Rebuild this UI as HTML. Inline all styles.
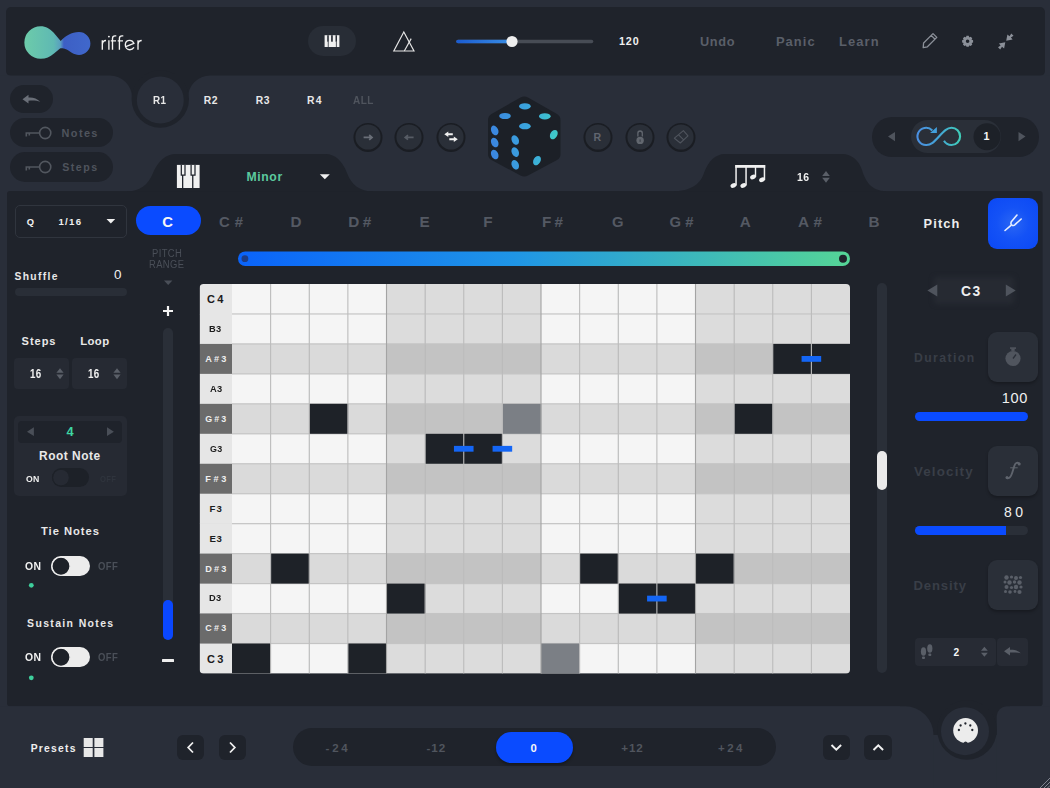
<!DOCTYPE html>
<html><head><meta charset="utf-8"><style>
html,body{margin:0;padding:0}
body{width:1050px;height:788px;position:relative;overflow:hidden;background:#292e39;font-family:"Liberation Sans",sans-serif}
.b{position:absolute;display:block}
.t{position:absolute;white-space:nowrap}
</style></head><body>
<svg class="b" style="left:0;top:0" width="1050" height="788" viewBox="0 0 1050 788"><rect x="0" y="0" width="1050" height="788" fill="#292e39"/><rect x="6" y="7" width="1039" height="69" rx="5" fill="#1f232b"/><rect x="105" y="74" width="110" height="27" fill="#1f232b"/><path d="M0,75.5 H110 A22,22 0 0 1 132,97.5 V150 H0 Z" fill="#292e39"/><path d="M188,150 V97.5 A22,22 0 0 1 210,75.5 H1050 V150 Z" fill="#292e39"/><circle cx="160.3" cy="99" r="28.7" fill="#1f232b"/><circle cx="160.3" cy="100" r="23.5" fill="#292e39"/><rect x="7" y="191" width="1035.6" height="515.3" rx="3" fill="#1f232b"/><path d="M126,191.5 C140,191.5 148,185 153,173 C158,161 166,154.1 176,154.1 H326 C334,154.1 342,160 347,173 C351,184 359,191.5 374,191.5 Z" fill="#1f232b"/><path d="M670,191.5 C690,191.5 700,185 704,173 C708,162 715,154.1 725,154.1 H842 C852,154.1 859,161 862,170 C866,183 872,191.5 890,191.5 Z" fill="#1f232b"/><rect x="900" y="704" width="110" height="31" fill="#1f232b"/><path d="M0,706.3 H905 A28.5,28.5 0 0 1 933.5,734.8 V788 H0 Z" fill="#292e39"/><path d="M996.7,788 V716 A10.3,10.3 0 0 1 1007,706.3 H1050 V788 Z" fill="#292e39"/><circle cx="967" cy="730" r="29.75" fill="#1f232b"/><circle cx="965" cy="731.2" r="24" fill="#292e39"/></svg>
<svg class="b" style="left:0px;top:0px;" width="160" height="80" viewBox="0 0 160 80"><defs><linearGradient id="lg" x1="23" y1="0" x2="91" y2="0" gradientUnits="userSpaceOnUse">
<stop offset="0" stop-color="#6dcca9"/><stop offset="0.45" stop-color="#5fb9b3"/><stop offset="0.55" stop-color="#5a9fc0"/><stop offset="0.6" stop-color="#3d5fc4"/><stop offset="1" stop-color="#4068cc"/></linearGradient></defs>
<path d="M40.6,26.3 C46,26.3 50,29 53.5,32.5 L60.7,40.9 C65,36.5 71.5,32.1 79,32.1 A11.4,11.4 0 0 1 79,54.9 C73.5,54.9 70.5,51.5 66,49.3 C63.5,48.2 61.5,48.2 60,48.4 L54,53.5 C50,57 46,58.8 40.6,58.8 A16.25,16.25 0 0 1 40.6,26.3 Z" fill="url(#lg)"/>
<g fill="none" stroke="#f2f2f2" stroke-width="1.35" stroke-linecap="butt">
<path d="M102.3,40.3 V49.7 M102.3,44.5 C102.5,41.5 104,40.5 106,40.5"/>
<path d="M108.9,40.3 V49.7"/>
<path d="M112.5,49.7 V38.5 C112.5,36.6 113.5,35.9 115,35.9 H116.3 M110.8,40.9 H116"/>
<path d="M119.4,49.7 V38.5 C119.4,36.6 120.4,35.9 122,35.9 H123.3 M117.7,40.9 H123"/>
<path d="M125.8,46.6 L133.9,43.3 C133,41.3 131.5,40.3 129.8,40.3 C127,40.3 125.3,42.4 125.3,45 C125.3,47.7 127.3,49.7 129.8,49.7 C131.6,49.7 133,48.8 134,47.4"/>
<path d="M138,40.3 V49.7 M138,44.5 C138.2,41.5 139.7,40.5 141.7,40.5"/>
</g>
<circle cx="108.9" cy="36.6" r="0.95" fill="#f2f2f2"/></svg>
<div class="b" style="left:308px;top:26px;width:48px;height:30px;background:#282d36;border-radius:15px;"></div>
<svg class="b" style="left:322px;top:33px;" width="20" height="17" viewBox="322 33 20 17"><rect x="324.6" y="35.2" width="14.8" height="11.8" fill="#f0f0f0"/>
<g fill="#282d36"><rect x="327.2" y="35.2" width="1.6" height="6.5"/><rect x="331.1" y="35.2" width="1.7" height="6.5"/><rect x="335.5" y="35.2" width="1.5" height="6.5"/><rect x="327.8" y="41.5" width="0.8" height="5.5"/><rect x="335.9" y="41.5" width="0.8" height="5.5"/></g></svg>
<svg class="b" style="left:390px;top:28px;" width="28" height="26" viewBox="390 28 28 26"><g fill="none" stroke="#e6e6e6" stroke-width="1.15" stroke-linejoin="miter"><path d="M403.8,32 L393.8,51 H414 Z"/><path d="M404.3,51 L411.2,38.6"/></g></svg>
<svg class="b" style="left:450px;top:32px;" width="150" height="20" viewBox="450 32 150 20"><defs><linearGradient id="tg" x1="456" y1="0" x2="512" y2="0" gradientUnits="userSpaceOnUse"><stop offset="0" stop-color="#1a5bd0"/><stop offset="1" stop-color="#3a8fe6"/></linearGradient></defs>
<line x1="458" y1="41.5" x2="591.5" y2="41.5" stroke="#474c55" stroke-width="3.6" stroke-linecap="round"/>
<line x1="458" y1="41.5" x2="512" y2="41.5" stroke="url(#tg)" stroke-width="3.6" stroke-linecap="round"/>
<circle cx="512" cy="41.5" r="5.6" fill="#eeeeee"/></svg>
<div class="t" style="left:618.90px;top:36.06px;font-size:10.76px;line-height:10.76px;letter-spacing:0.93px;font-weight:700;color:#f0f0f0;">120</div>
<div class="t" style="left:699.90px;top:36.24px;font-size:12.76px;line-height:12.76px;letter-spacing:0.73px;font-weight:700;color:#5a5f69;">Undo</div>
<div class="t" style="left:775.90px;top:36.21px;font-size:12.95px;line-height:12.95px;letter-spacing:1.07px;font-weight:700;color:#5a5f69;">Panic</div>
<div class="t" style="left:839.00px;top:36.21px;font-size:12.95px;line-height:12.95px;letter-spacing:1.09px;font-weight:700;color:#5a5f69;">Learn</div>
<svg class="b" style="left:915px;top:28px;" width="30" height="26" viewBox="915 28 30 26"><g fill="none" stroke="#8b9099" stroke-width="1.3" stroke-linejoin="round"><path d="M923.2,47.6 L923.6,43 L933,33.6 L936.8,37.4 L927.4,46.8 Z M931.2,35.4 L935,39.2"/></g></svg>
<svg class="b" style="left:955px;top:29px;" width="25" height="25" viewBox="955 29 25 25"><path d="M973.09,40.19 L973.09,42.41 L971.43,43.01 L971.52,42.80 L972.27,44.39 L970.69,45.97 L969.10,45.22 L969.31,45.13 L968.71,46.79 L966.49,46.79 L965.89,45.13 L966.10,45.22 L964.51,45.97 L962.93,44.39 L963.68,42.80 L963.77,43.01 L962.11,42.41 L962.11,40.19 L963.77,39.59 L963.68,39.80 L962.93,38.21 L964.51,36.63 L966.10,37.38 L965.89,37.47 L966.49,35.81 L968.71,35.81 L969.31,37.47 L969.10,37.38 L970.69,36.63 L972.27,38.21 L971.52,39.80 L971.43,39.59 Z M969.4,41.3 A1.8,1.8 0 1 0 965.8000000000001,41.3 A1.8,1.8 0 1 0 969.4,41.3 Z" fill="#8b9099" fill-rule="evenodd"/></svg>
<svg class="b" style="left:994px;top:30px;" width="24" height="22" viewBox="994 30 24 22"><g fill="#8b9099"><path d="M1006.2,40.8 L1007.4,34.4 L1009.5,36.3 L1011.3,33.6 L1013.5,35.8 L1010.9,37.6 L1012.6,39.6 Z"/><path d="M1005.3,42.2 L1004.1,48.6 L1002,46.7 L1000.2,49.4 L998,47.2 L1000.6,45.4 L998.9,43.4 Z"/></g></svg>
<div class="b" style="left:10px;top:85px;width:43px;height:28px;background:#1f232b;border-radius:14px;"></div>
<svg class="b" style="left:18px;top:90px;" width="28" height="20" viewBox="18 90 28 20"><path d="M22.5,99.2 L28.5,94.8 L28.5,97.6 C33,97.2 37,98.6 40.3,101.8 C36.8,100.6 33,100.4 28.5,100.8 L28.5,103.6 Z" fill="#6a6f78"/></svg>
<div class="b" style="left:10px;top:118px;width:103px;height:29px;background:#1f232b;border-radius:15px;"></div>
<div class="b" style="left:10px;top:152px;width:103px;height:30px;background:#1f232b;border-radius:15px;"></div>
<svg class="b" style="left:20px;top:122.80000000000001px;" width="36" height="20" viewBox="20 122.80000000000001 36 20"><g fill="none" stroke="#52575f" stroke-width="1.6"><circle cx="45.2" cy="132.8" r="5.6"/><path d="M25.5,132.8 H39.5 M26.3,132.8 V136.3 M29.3,132.8 V135.3"/></g></svg>
<svg class="b" style="left:20px;top:157px;" width="36" height="20" viewBox="20 157 36 20"><g fill="none" stroke="#52575f" stroke-width="1.6"><circle cx="45.2" cy="167" r="5.6"/><path d="M25.5,167 H39.5 M26.3,167 V170.5 M29.3,167 V169.5"/></g></svg>
<div class="t" style="left:61.60px;top:128.14px;font-size:10.91px;line-height:10.91px;letter-spacing:1.38px;font-weight:700;color:#4f545d;">Notes</div>
<div class="t" style="left:62.20px;top:161.99px;font-size:10.60px;line-height:10.60px;letter-spacing:1.51px;font-weight:700;color:#4f545d;">Steps</div>
<div class="t" style="left:153.00px;top:96.33px;font-size:10.33px;line-height:10.33px;letter-spacing:0.40px;font-weight:700;transform:scaleX(0.956);transform-origin:0 0;color:#e8e8e8;">R1</div>
<div class="t" style="left:203.70px;top:96.33px;font-size:10.33px;line-height:10.33px;letter-spacing:0.51px;font-weight:700;color:#e8e8e8;">R2</div>
<div class="t" style="left:255.70px;top:96.33px;font-size:10.33px;line-height:10.33px;letter-spacing:0.51px;font-weight:700;color:#e8e8e8;">R3</div>
<div class="t" style="left:307.10px;top:96.33px;font-size:10.33px;line-height:10.33px;letter-spacing:1.11px;font-weight:700;color:#e8e8e8;">R4</div>
<div class="t" style="left:352.90px;top:96.33px;font-size:10.33px;line-height:10.33px;letter-spacing:0.40px;font-weight:700;transform:scaleX(0.972);transform-origin:0 0;color:#4f545d;">ALL</div>
<svg class="b" style="left:350.6px;top:119.6px;" width="34" height="34" viewBox="350.6 119.6 34 34"><circle cx="367.6" cy="137.2" r="14.5" fill="#1a1d23"/><circle cx="367.6" cy="136.6" r="12.6" fill="#2a2f38"/><path d="M363.2,137 H371.5 M368.8,134.6 L371.6,137 L368.8,139.4" fill="none" stroke="#6a6f78" stroke-width="1.7"/></svg>
<svg class="b" style="left:392.4px;top:119.6px;" width="34" height="34" viewBox="392.4 119.6 34 34"><circle cx="409.4" cy="137.2" r="14.5" fill="#1a1d23"/><circle cx="409.4" cy="136.6" r="12.6" fill="#2a2f38"/><path d="M414,137 H405.8 M408.4,134.7 L405.6,137 L408.4,139.3" fill="none" stroke="#575c65" stroke-width="1.7"/></svg>
<svg class="b" style="left:434.2px;top:119.6px;" width="34" height="34" viewBox="434.2 119.6 34 34"><circle cx="451.2" cy="137.2" r="14.5" fill="#1a1d23"/><circle cx="451.2" cy="136.6" r="12.6" fill="#2a2f38"/><g fill="#f0f0f0"><path d="M444.5,133.8 L448.5,131 V132.8 H453 V134.8 H448.5 V136.6 Z"/><path d="M458,138.8 L454,136 V137.8 H449.5 V139.8 H454 V141.6 Z"/></g></svg>
<svg class="b" style="left:580.9px;top:119.6px;" width="34" height="34" viewBox="580.9 119.6 34 34"><circle cx="597.9" cy="137.2" r="14.5" fill="#1a1d23"/><circle cx="597.9" cy="136.6" r="12.6" fill="#2a2f38"/></svg>
<div class="t" style="left:593.50px;top:132.19px;font-size:10.62px;line-height:10.62px;letter-spacing:0.00px;font-weight:700;color:#61666f;">R</div>
<svg class="b" style="left:622.7px;top:119.6px;" width="34" height="34" viewBox="622.7 119.6 34 34"><circle cx="639.7" cy="137.2" r="14.5" fill="#1a1d23"/><circle cx="639.7" cy="136.6" r="12.6" fill="#2a2f38"/><g fill="#62676f"><path d="M637.6,136 V132.8 A2.2,2.2 0 0 1 642,132.8 V136" fill="none" stroke="#62676f" stroke-width="1.3"/><circle cx="639.8" cy="140" r="3.7"/></g><path d="M639.8,139 V141.5" stroke="#2a2f38" stroke-width="0.8"/></svg>
<svg class="b" style="left:664.2px;top:119.6px;" width="34" height="34" viewBox="664.2 119.6 34 34"><circle cx="681.2" cy="137.2" r="14.5" fill="#1a1d23"/><circle cx="681.2" cy="136.6" r="12.6" fill="#2a2f38"/><g fill="none" stroke="#4f545d" stroke-width="1.1" stroke-linejoin="round"><path d="M683.6,130.3 L688.2,135.4 L680.5,142.6 L674.6,137.8 Z M678.8,134.4 L683.6,139.2"/></g></svg>
<svg class="b" style="left:480px;top:90px;" width="90" height="95" viewBox="480 90 90 95"><defs><linearGradient id="dg" x1="488" y1="0" x2="562" y2="0" gradientUnits="userSpaceOnUse"><stop offset="0" stop-color="#3b82e0"/><stop offset="0.55" stop-color="#3aa6dd"/><stop offset="1" stop-color="#40d0c4"/></linearGradient></defs>
<path d="M520.5,97.5 Q524.3,95.5 528,97.5 L557,114 Q560.5,116 560.5,120 V154 Q560.5,158 557,160 L528,175.5 Q524.3,177.5 520.5,175.5 L491.5,160 Q488,158 488,154 V120 Q488,116 491.5,114 Z" fill="#1c2027"/>
<g fill="url(#dg)">
<ellipse cx="524.9" cy="106.3" rx="5.8" ry="3.1"/>
<ellipse cx="505" cy="116" rx="5.8" ry="3.1"/>
<ellipse cx="544.8" cy="116.3" rx="5.8" ry="3.1"/>
<ellipse cx="524.9" cy="126.2" rx="5.8" ry="3.1"/>
<ellipse cx="494.7" cy="130.4" rx="3.5" ry="5" transform="rotate(-25 494.7 130.4)"/>
<ellipse cx="494.7" cy="142.5" rx="3.5" ry="5" transform="rotate(-25 494.7 142.5)"/>
<ellipse cx="494.7" cy="154.5" rx="3.5" ry="5" transform="rotate(-25 494.7 154.5)"/>
<ellipse cx="515.2" cy="140" rx="3.5" ry="5" transform="rotate(-25 515.2 140)"/>
<ellipse cx="515.2" cy="152.1" rx="3.5" ry="5" transform="rotate(-25 515.2 152.1)"/>
<ellipse cx="515.2" cy="164.8" rx="3.5" ry="5" transform="rotate(-25 515.2 164.8)"/>
<ellipse cx="553.8" cy="134.6" rx="3.5" ry="5" transform="rotate(30 553.8 134.6)"/>
<ellipse cx="537" cy="160.6" rx="3.5" ry="5" transform="rotate(30 537 160.6)"/>
</g></svg>
<div class="b" style="left:872px;top:117px;width:167px;height:40px;background:#1f232b;border-radius:20px;"></div>
<div class="b" style="left:911px;top:120px;width:90px;height:33px;background:#2a2f38;border-radius:16.5px;"></div>
<svg class="b" style="left:880px;top:125px;" width="20" height="20" viewBox="880 125 20 20"><path d="M895,132 L888,136.6 L895,141.2 Z" fill="#4f545d"/></svg>
<svg class="b" style="left:1010px;top:125px;" width="20" height="20" viewBox="1010 125 20 20"><path d="M1018.5,132 L1025.5,136.6 L1018.5,141.2 Z" fill="#4f545d"/></svg>
<svg class="b" style="left:972px;top:122px;" width="30" height="30" viewBox="972 122 30 30"><circle cx="987" cy="136.7" r="13.5" fill="#1d2128"/></svg>
<div class="t" style="left:983.50px;top:131.46px;font-size:10.76px;line-height:10.76px;letter-spacing:0.00px;font-weight:700;color:#f4f4f4;">1</div>
<svg class="b" style="left:912px;top:120px;" width="55" height="32" viewBox="912 120 55 32"><defs><linearGradient id="ig" x1="917" y1="0" x2="962" y2="0" gradientUnits="userSpaceOnUse"><stop offset="0" stop-color="#4a8ee0"/><stop offset="0.5" stop-color="#44a6d6"/><stop offset="1" stop-color="#3fd0b6"/></linearGradient></defs>
<path d="M932.3,130.5 A8.6,8.6 0 1 0 926.4,145 C931,145 934,142 939,136.5 C944,131 947,127.8 951.5,127.8 A8.6,8.6 0 0 1 951.5,145 A8.6,8.6 0 0 1 944,140.7" fill="none" stroke="url(#ig)" stroke-width="2.1"/>
<path d="M930.1,132.9 L936.9,133.1 L936.9,126.9 Z" fill="#42a0dc"/></svg>
<svg class="b" style="left:175px;top:163px;" width="28" height="28" viewBox="175 163 28 28"><rect x="176.9" y="164.9" width="22.7" height="23.1" fill="#f0f0f0"/>
<g fill="none" stroke="#1f232b" stroke-width="1.25"><path d="M181.3,164.9 V175 H185 V164.9"/><path d="M191.1,164.9 V175 H195 V164.9"/></g>
<g fill="#1f232b"><rect x="182" y="175" width="1.3" height="13"/><rect x="192.1" y="175" width="1.3" height="13"/></g></svg>
<div class="t" style="left:246.60px;top:170.63px;font-size:12.22px;line-height:12.22px;letter-spacing:0.58px;font-weight:700;color:#5cc99e;">Minor</div>
<svg class="b" style="left:316px;top:170px;" width="18" height="12" viewBox="316 170 18 12"><path d="M319.8,174.3 H329.8 L324.8,179.2 Z" fill="#f0f0f0"/></svg>
<svg class="b" style="left:725px;top:160px;" width="45" height="32" viewBox="725 160 45 32"><g fill="#f0f0f0"><ellipse cx="733.4" cy="185.6" rx="3" ry="2.2" transform="rotate(-25 733.4 185.6)"/><ellipse cx="743.3" cy="185.6" rx="3" ry="2.2" transform="rotate(-25 743.3 185.6)"/><ellipse cx="753" cy="177" rx="3" ry="2.2" transform="rotate(-25 753 177)"/><ellipse cx="762" cy="179.8" rx="3" ry="2.2" transform="rotate(-25 762 179.8)"/>
<rect x="735.3" y="165" width="1.5" height="20.5"/><rect x="745.3" y="165" width="1.5" height="20.5"/><rect x="754.8" y="165" width="1.4" height="12"/><rect x="763.7" y="165" width="1.5" height="15"/>
<rect x="735.3" y="165" width="29.9" height="2.8"/></g></svg>
<div class="t" style="left:797.00px;top:171.57px;font-size:11.35px;line-height:11.35px;letter-spacing:0.40px;font-weight:700;transform:scaleX(0.922);transform-origin:0 0;color:#f0f0f0;">16</div>
<svg class="b" style="left:818px;top:168px;" width="16" height="18" viewBox="818 168 16 18"><g fill="#5a5f68"><path d="M822.2,176 L826,171 L829.8,176 Z"/><path d="M822.2,177.8 L826,182.8 L829.8,177.8 Z"/></g></svg>
<div class="b" style="left:14.5px;top:205.2px;width:112.5px;height:32.80000000000001px;background:#1f232b;border-radius:5px;border:1px solid #30353e;box-sizing:border-box"></div>
<div class="t" style="left:26.70px;top:218.19px;font-size:9.33px;line-height:9.33px;letter-spacing:0.00px;font-weight:700;color:#f0f0f0;">Q</div>
<div class="t" style="left:58.40px;top:217.05px;font-size:9.60px;line-height:9.60px;letter-spacing:1.30px;font-weight:700;color:#f0f0f0;">1/16</div>
<svg class="b" style="left:103px;top:215px;" width="16" height="12" viewBox="103 215 16 12"><path d="M106.5,219 H115.2 L110.85,223.5 Z" fill="#f0f0f0"/></svg>
<div class="t" style="left:14.50px;top:272.14px;font-size:10.32px;line-height:10.32px;letter-spacing:1.34px;font-weight:700;color:#e8e8e8;">Shuffle</div>
<div class="t" style="left:114.10px;top:267.97px;font-size:13.43px;line-height:13.43px;letter-spacing:0.00px;font-weight:400;color:#f0f0f0;">0</div>
<div class="b" style="left:14.5px;top:288.4px;width:112.5px;height:8.100000000000023px;background:#292e37;border-radius:4px;"></div>
<div class="t" style="left:21.60px;top:336.13px;font-size:11.02px;line-height:11.02px;letter-spacing:0.97px;font-weight:700;color:#e8e8e8;">Steps</div>
<div class="t" style="left:80.20px;top:335.97px;font-size:11.35px;line-height:11.35px;letter-spacing:0.40px;font-weight:700;transform:scaleX(1.000);transform-origin:0 0;color:#e8e8e8;">Loop</div>
<div class="b" style="left:14.3px;top:358.3px;width:54.7px;height:31.099999999999966px;background:#262a33;border-radius:4px;"></div>
<div class="b" style="left:72px;top:358.3px;width:54.7px;height:31.099999999999966px;background:#262a33;border-radius:4px;"></div>
<div class="t" style="left:30.10px;top:368.41px;font-size:12.95px;line-height:12.95px;letter-spacing:0.40px;font-weight:700;transform:scaleX(0.757);transform-origin:0 0;color:#f0f0f0;">16</div>
<div class="t" style="left:88.10px;top:368.41px;font-size:12.95px;line-height:12.95px;letter-spacing:0.40px;font-weight:700;transform:scaleX(0.757);transform-origin:0 0;color:#f0f0f0;">16</div>
<svg class="b" style="left:53.5px;top:366px;" width="12" height="16" viewBox="53.5 366 12 16"><g fill="#5a5f68"><path d="M55.9,372.8 L59.5,368.2 L63.1,372.8 Z"/><path d="M55.9,374.6 L59.5,379.2 L63.1,374.6 Z"/></g></svg>
<svg class="b" style="left:111.2px;top:366px;" width="12" height="16" viewBox="111.2 366 12 16"><g fill="#5a5f68"><path d="M113.60000000000001,372.8 L117.2,368.2 L120.8,372.8 Z"/><path d="M113.60000000000001,374.6 L117.2,379.2 L120.8,374.6 Z"/></g></svg>
<div class="b" style="left:14.3px;top:416px;width:112.4px;height:80px;background:#262a33;border-radius:5px;"></div>
<div class="b" style="left:18.3px;top:420.5px;width:104.0px;height:22.30000000000001px;background:#1f232b;border-radius:4px;"></div>
<svg class="b" style="left:24px;top:424px;" width="14" height="16" viewBox="24 424 14 16"><path d="M33.9,427.3 L27,431.7 L33.9,436.1 Z" fill="#4a4f58"/></svg>
<svg class="b" style="left:104px;top:424px;" width="14" height="16" viewBox="104 424 14 16"><path d="M107,427.3 L113.9,431.7 L107,436.1 Z" fill="#4a4f58"/></svg>
<div class="t" style="left:66.40px;top:425.73px;font-size:12.80px;line-height:12.80px;letter-spacing:0.00px;font-weight:700;color:#3ed6a2;">4</div>
<div class="t" style="left:39.10px;top:451.07px;font-size:11.93px;line-height:11.93px;letter-spacing:0.51px;font-weight:700;color:#e8e8e8;">Root Note</div>
<div class="t" style="left:26.20px;top:473.67px;font-size:9.47px;line-height:9.47px;letter-spacing:0.40px;font-weight:700;transform:scaleX(0.917);transform-origin:0 0;color:#f0f0f0;">ON</div>
<div class="b" style="left:51.7px;top:468.3px;width:37.7px;height:18.69999999999999px;background:#1d2128;border-radius:9.4px;"></div>
<svg class="b" style="left:50px;top:466px;" width="24" height="24" viewBox="50 466 24 24"><circle cx="61" cy="477.6" r="8.3" fill="#262a33" stroke="#1d2128" stroke-width="1"/></svg>
<div class="t" style="left:100.00px;top:473.67px;font-size:9.47px;line-height:9.47px;letter-spacing:0.40px;font-weight:700;transform:scaleX(0.811);transform-origin:0 0;color:#2f343d;">OFF</div>
<div class="t" style="left:41.00px;top:526.29px;font-size:11.20px;line-height:11.20px;letter-spacing:0.97px;font-weight:700;color:#e8e8e8;">Tie Notes</div>
<div class="t" style="left:27.10px;top:618.62px;font-size:10.46px;line-height:10.46px;letter-spacing:1.36px;font-weight:700;color:#e8e8e8;">Sustain Notes</div>
<div class="b" style="left:50.7px;top:555.5px;width:39.3px;height:20.5px;background:#ececec;border-radius:10.25px;"></div>
<svg class="b" style="left:48px;top:553.5px;" width="26" height="25" viewBox="48 553.5 26 25"><circle cx="61" cy="565.75" r="9.1" fill="#1d2128" stroke="#ececec" stroke-width="1.4"/></svg>
<div class="b" style="left:50.7px;top:646.7px;width:39.3px;height:20.5px;background:#ececec;border-radius:10.25px;"></div>
<svg class="b" style="left:48px;top:644.7px;" width="26" height="25" viewBox="48 644.7 26 25"><circle cx="61" cy="656.95" r="9.1" fill="#1d2128" stroke="#ececec" stroke-width="1.4"/></svg>
<div class="t" style="left:24.80px;top:561.62px;font-size:10.46px;line-height:10.46px;letter-spacing:0.40px;font-weight:700;transform:scaleX(0.994);transform-origin:0 0;color:#f0f0f0;">ON</div>
<div class="t" style="left:97.80px;top:561.62px;font-size:10.46px;line-height:10.46px;letter-spacing:0.40px;font-weight:700;transform:scaleX(0.912);transform-origin:0 0;color:#4a4f58;">OFF</div>
<div class="t" style="left:24.80px;top:653.42px;font-size:10.46px;line-height:10.46px;letter-spacing:0.40px;font-weight:700;transform:scaleX(0.994);transform-origin:0 0;color:#f0f0f0;">ON</div>
<div class="t" style="left:97.80px;top:653.42px;font-size:10.46px;line-height:10.46px;letter-spacing:0.40px;font-weight:700;transform:scaleX(0.912);transform-origin:0 0;color:#4a4f58;">OFF</div>
<svg class="b" style="left:26px;top:580px;" width="12" height="12" viewBox="26 580 12 12"><circle cx="31.3" cy="585.3" r="2.4" fill="#3ecf9c"/></svg>
<svg class="b" style="left:26px;top:672px;" width="12" height="12" viewBox="26 672 12 12"><circle cx="31.3" cy="677.8" r="2.4" fill="#3ecf9c"/></svg>
<div class="t" style="left:152.30px;top:249.48px;font-size:10.04px;line-height:10.04px;letter-spacing:0.40px;font-weight:400;transform:scaleX(0.940);transform-origin:0 0;color:#4a4f58;">PITCH</div>
<div class="t" style="left:149.00px;top:260.36px;font-size:10.18px;line-height:10.18px;letter-spacing:0.40px;font-weight:400;transform:scaleX(0.926);transform-origin:0 0;color:#4a4f58;">RANGE</div>
<svg class="b" style="left:160px;top:277px;" width="16" height="12" viewBox="160 277 16 12"><path d="M164,280.6 H172.4 L168.2,285 Z" fill="#4a4f58"/></svg>
<svg class="b" style="left:158px;top:302px;" width="20" height="20" viewBox="158 302 20 20"><path d="M163,311 H173 M168,306 V316" stroke="#f4f4f4" stroke-width="2.2"/></svg>
<div class="b" style="left:163px;top:327.5px;width:10px;height:312.79999999999995px;background:#2a2f38;border-radius:5px;"></div>
<div class="b" style="left:163px;top:600.3px;width:10px;height:40.0px;background:#0a47ff;border-radius:5px;"></div>
<div class="b" style="left:162px;top:659.3px;width:12px;height:2.5px;background:#eeeeee;border-radius:0.5px;"></div>
<div class="b" style="left:136px;top:205.7px;width:65px;height:29.5px;background:#0a4bff;border-radius:15px;"></div>
<div class="t" style="left:162.30px;top:214.65px;font-size:14.84px;line-height:14.84px;letter-spacing:0.00px;font-weight:700;color:#f6f6f6;">C</div>
<div class="t" style="left:219.10px;top:214.75px;font-size:14.84px;line-height:14.84px;letter-spacing:4.84px;font-weight:700;color:#545963;">C#</div>
<div class="t" style="left:290.50px;top:213.53px;font-size:15.27px;line-height:15.27px;letter-spacing:0.00px;font-weight:700;color:#545963;">D</div>
<div class="t" style="left:348.30px;top:213.53px;font-size:15.27px;line-height:15.27px;letter-spacing:3.39px;font-weight:700;color:#545963;">D#</div>
<div class="t" style="left:419.50px;top:213.53px;font-size:15.27px;line-height:15.27px;letter-spacing:0.00px;font-weight:700;color:#545963;">E</div>
<div class="t" style="left:483.30px;top:213.53px;font-size:15.27px;line-height:15.27px;letter-spacing:0.00px;font-weight:700;color:#545963;">F</div>
<div class="t" style="left:541.90px;top:213.53px;font-size:15.27px;line-height:15.27px;letter-spacing:3.37px;font-weight:700;color:#545963;">F#</div>
<div class="t" style="left:611.90px;top:214.75px;font-size:14.84px;line-height:14.84px;letter-spacing:0.00px;font-weight:700;color:#545963;">G</div>
<div class="t" style="left:669.50px;top:214.75px;font-size:14.84px;line-height:14.84px;letter-spacing:4.19px;font-weight:700;color:#545963;">G#</div>
<div class="t" style="left:739.80px;top:213.53px;font-size:15.27px;line-height:15.27px;letter-spacing:0.00px;font-weight:700;color:#545963;">A</div>
<div class="t" style="left:798.00px;top:213.53px;font-size:15.27px;line-height:15.27px;letter-spacing:4.49px;font-weight:700;color:#545963;">A#</div>
<div class="t" style="left:868.50px;top:213.53px;font-size:15.27px;line-height:15.27px;letter-spacing:0.00px;font-weight:700;color:#545963;">B</div>
<svg class="b" style="left:230px;top:245px;" width="630" height="28" viewBox="230 245 630 28"><defs><linearGradient id="gb" x1="238" y1="0" x2="850" y2="0" gradientUnits="userSpaceOnUse"><stop offset="0" stop-color="#0a63fa"/><stop offset="0.45" stop-color="#1f95e6"/><stop offset="1" stop-color="#55d596"/></linearGradient></defs>
<rect x="238" y="251.5" width="612" height="14.5" rx="7.25" fill="url(#gb)"/>
<circle cx="244.9" cy="258.7" r="3.4" fill="#1d3c85"/>
<circle cx="843" cy="258.7" r="4" fill="#1f232b"/></svg>
<svg class="b" style="left:195px;top:280px;" width="660" height="400" viewBox="195 280 660 400"><defs><clipPath id="gc"><rect x="199.6" y="284" width="650.4" height="389.5" rx="4"/></clipPath></defs><g clip-path="url(#gc)"><rect x="199.6" y="284.00" width="32.4" height="30.26" fill="#e6e6e6"/><rect x="232.00" y="284.00" width="38.92" height="30.26" fill="#f5f5f5"/><rect x="270.62" y="284.00" width="38.92" height="30.26" fill="#f5f5f5"/><rect x="309.25" y="284.00" width="38.92" height="30.26" fill="#f5f5f5"/><rect x="347.88" y="284.00" width="38.92" height="30.26" fill="#f5f5f5"/><rect x="386.50" y="284.00" width="38.92" height="30.26" fill="#dcdcdc"/><rect x="425.12" y="284.00" width="38.92" height="30.26" fill="#dcdcdc"/><rect x="463.75" y="284.00" width="38.92" height="30.26" fill="#dcdcdc"/><rect x="502.38" y="284.00" width="38.92" height="30.26" fill="#dcdcdc"/><rect x="541.00" y="284.00" width="38.92" height="30.26" fill="#f5f5f5"/><rect x="579.62" y="284.00" width="38.92" height="30.26" fill="#f5f5f5"/><rect x="618.25" y="284.00" width="38.92" height="30.26" fill="#f5f5f5"/><rect x="656.88" y="284.00" width="38.92" height="30.26" fill="#f5f5f5"/><rect x="695.50" y="284.00" width="38.92" height="30.26" fill="#dcdcdc"/><rect x="734.12" y="284.00" width="38.92" height="30.26" fill="#dcdcdc"/><rect x="772.75" y="284.00" width="38.92" height="30.26" fill="#dcdcdc"/><rect x="811.38" y="284.00" width="38.92" height="30.26" fill="#dcdcdc"/><rect x="199.6" y="313.96" width="32.4" height="30.26" fill="#e6e6e6"/><rect x="232.00" y="313.96" width="38.92" height="30.26" fill="#f5f5f5"/><rect x="270.62" y="313.96" width="38.92" height="30.26" fill="#f5f5f5"/><rect x="309.25" y="313.96" width="38.92" height="30.26" fill="#f5f5f5"/><rect x="347.88" y="313.96" width="38.92" height="30.26" fill="#f5f5f5"/><rect x="386.50" y="313.96" width="38.92" height="30.26" fill="#dcdcdc"/><rect x="425.12" y="313.96" width="38.92" height="30.26" fill="#dcdcdc"/><rect x="463.75" y="313.96" width="38.92" height="30.26" fill="#dcdcdc"/><rect x="502.38" y="313.96" width="38.92" height="30.26" fill="#dcdcdc"/><rect x="541.00" y="313.96" width="38.92" height="30.26" fill="#f5f5f5"/><rect x="579.62" y="313.96" width="38.92" height="30.26" fill="#f5f5f5"/><rect x="618.25" y="313.96" width="38.92" height="30.26" fill="#f5f5f5"/><rect x="656.88" y="313.96" width="38.92" height="30.26" fill="#f5f5f5"/><rect x="695.50" y="313.96" width="38.92" height="30.26" fill="#dcdcdc"/><rect x="734.12" y="313.96" width="38.92" height="30.26" fill="#dcdcdc"/><rect x="772.75" y="313.96" width="38.92" height="30.26" fill="#dcdcdc"/><rect x="811.38" y="313.96" width="38.92" height="30.26" fill="#dcdcdc"/><rect x="199.6" y="343.92" width="32.4" height="30.26" fill="#6b6b6b"/><rect x="232.00" y="343.92" width="38.92" height="30.26" fill="#dadada"/><rect x="270.62" y="343.92" width="38.92" height="30.26" fill="#dadada"/><rect x="309.25" y="343.92" width="38.92" height="30.26" fill="#dadada"/><rect x="347.88" y="343.92" width="38.92" height="30.26" fill="#dadada"/><rect x="386.50" y="343.92" width="38.92" height="30.26" fill="#c3c3c3"/><rect x="425.12" y="343.92" width="38.92" height="30.26" fill="#c3c3c3"/><rect x="463.75" y="343.92" width="38.92" height="30.26" fill="#c3c3c3"/><rect x="502.38" y="343.92" width="38.92" height="30.26" fill="#c3c3c3"/><rect x="541.00" y="343.92" width="38.92" height="30.26" fill="#dadada"/><rect x="579.62" y="343.92" width="38.92" height="30.26" fill="#dadada"/><rect x="618.25" y="343.92" width="38.92" height="30.26" fill="#dadada"/><rect x="656.88" y="343.92" width="38.92" height="30.26" fill="#dadada"/><rect x="695.50" y="343.92" width="38.92" height="30.26" fill="#c3c3c3"/><rect x="734.12" y="343.92" width="38.92" height="30.26" fill="#c3c3c3"/><rect x="772.75" y="343.92" width="38.92" height="30.26" fill="#c3c3c3"/><rect x="811.38" y="343.92" width="38.92" height="30.26" fill="#c3c3c3"/><rect x="199.6" y="373.88" width="32.4" height="30.26" fill="#e6e6e6"/><rect x="232.00" y="373.88" width="38.92" height="30.26" fill="#f5f5f5"/><rect x="270.62" y="373.88" width="38.92" height="30.26" fill="#f5f5f5"/><rect x="309.25" y="373.88" width="38.92" height="30.26" fill="#f5f5f5"/><rect x="347.88" y="373.88" width="38.92" height="30.26" fill="#f5f5f5"/><rect x="386.50" y="373.88" width="38.92" height="30.26" fill="#dcdcdc"/><rect x="425.12" y="373.88" width="38.92" height="30.26" fill="#dcdcdc"/><rect x="463.75" y="373.88" width="38.92" height="30.26" fill="#dcdcdc"/><rect x="502.38" y="373.88" width="38.92" height="30.26" fill="#dcdcdc"/><rect x="541.00" y="373.88" width="38.92" height="30.26" fill="#f5f5f5"/><rect x="579.62" y="373.88" width="38.92" height="30.26" fill="#f5f5f5"/><rect x="618.25" y="373.88" width="38.92" height="30.26" fill="#f5f5f5"/><rect x="656.88" y="373.88" width="38.92" height="30.26" fill="#f5f5f5"/><rect x="695.50" y="373.88" width="38.92" height="30.26" fill="#dcdcdc"/><rect x="734.12" y="373.88" width="38.92" height="30.26" fill="#dcdcdc"/><rect x="772.75" y="373.88" width="38.92" height="30.26" fill="#dcdcdc"/><rect x="811.38" y="373.88" width="38.92" height="30.26" fill="#dcdcdc"/><rect x="199.6" y="403.84" width="32.4" height="30.26" fill="#6b6b6b"/><rect x="232.00" y="403.84" width="38.92" height="30.26" fill="#dadada"/><rect x="270.62" y="403.84" width="38.92" height="30.26" fill="#dadada"/><rect x="309.25" y="403.84" width="38.92" height="30.26" fill="#dadada"/><rect x="347.88" y="403.84" width="38.92" height="30.26" fill="#dadada"/><rect x="386.50" y="403.84" width="38.92" height="30.26" fill="#c3c3c3"/><rect x="425.12" y="403.84" width="38.92" height="30.26" fill="#c3c3c3"/><rect x="463.75" y="403.84" width="38.92" height="30.26" fill="#c3c3c3"/><rect x="502.38" y="403.84" width="38.92" height="30.26" fill="#c3c3c3"/><rect x="541.00" y="403.84" width="38.92" height="30.26" fill="#dadada"/><rect x="579.62" y="403.84" width="38.92" height="30.26" fill="#dadada"/><rect x="618.25" y="403.84" width="38.92" height="30.26" fill="#dadada"/><rect x="656.88" y="403.84" width="38.92" height="30.26" fill="#dadada"/><rect x="695.50" y="403.84" width="38.92" height="30.26" fill="#c3c3c3"/><rect x="734.12" y="403.84" width="38.92" height="30.26" fill="#c3c3c3"/><rect x="772.75" y="403.84" width="38.92" height="30.26" fill="#c3c3c3"/><rect x="811.38" y="403.84" width="38.92" height="30.26" fill="#c3c3c3"/><rect x="199.6" y="433.80" width="32.4" height="30.26" fill="#e6e6e6"/><rect x="232.00" y="433.80" width="38.92" height="30.26" fill="#f5f5f5"/><rect x="270.62" y="433.80" width="38.92" height="30.26" fill="#f5f5f5"/><rect x="309.25" y="433.80" width="38.92" height="30.26" fill="#f5f5f5"/><rect x="347.88" y="433.80" width="38.92" height="30.26" fill="#f5f5f5"/><rect x="386.50" y="433.80" width="38.92" height="30.26" fill="#dcdcdc"/><rect x="425.12" y="433.80" width="38.92" height="30.26" fill="#dcdcdc"/><rect x="463.75" y="433.80" width="38.92" height="30.26" fill="#dcdcdc"/><rect x="502.38" y="433.80" width="38.92" height="30.26" fill="#dcdcdc"/><rect x="541.00" y="433.80" width="38.92" height="30.26" fill="#f5f5f5"/><rect x="579.62" y="433.80" width="38.92" height="30.26" fill="#f5f5f5"/><rect x="618.25" y="433.80" width="38.92" height="30.26" fill="#f5f5f5"/><rect x="656.88" y="433.80" width="38.92" height="30.26" fill="#f5f5f5"/><rect x="695.50" y="433.80" width="38.92" height="30.26" fill="#dcdcdc"/><rect x="734.12" y="433.80" width="38.92" height="30.26" fill="#dcdcdc"/><rect x="772.75" y="433.80" width="38.92" height="30.26" fill="#dcdcdc"/><rect x="811.38" y="433.80" width="38.92" height="30.26" fill="#dcdcdc"/><rect x="199.6" y="463.76" width="32.4" height="30.26" fill="#6b6b6b"/><rect x="232.00" y="463.76" width="38.92" height="30.26" fill="#dadada"/><rect x="270.62" y="463.76" width="38.92" height="30.26" fill="#dadada"/><rect x="309.25" y="463.76" width="38.92" height="30.26" fill="#dadada"/><rect x="347.88" y="463.76" width="38.92" height="30.26" fill="#dadada"/><rect x="386.50" y="463.76" width="38.92" height="30.26" fill="#c3c3c3"/><rect x="425.12" y="463.76" width="38.92" height="30.26" fill="#c3c3c3"/><rect x="463.75" y="463.76" width="38.92" height="30.26" fill="#c3c3c3"/><rect x="502.38" y="463.76" width="38.92" height="30.26" fill="#c3c3c3"/><rect x="541.00" y="463.76" width="38.92" height="30.26" fill="#dadada"/><rect x="579.62" y="463.76" width="38.92" height="30.26" fill="#dadada"/><rect x="618.25" y="463.76" width="38.92" height="30.26" fill="#dadada"/><rect x="656.88" y="463.76" width="38.92" height="30.26" fill="#dadada"/><rect x="695.50" y="463.76" width="38.92" height="30.26" fill="#c3c3c3"/><rect x="734.12" y="463.76" width="38.92" height="30.26" fill="#c3c3c3"/><rect x="772.75" y="463.76" width="38.92" height="30.26" fill="#c3c3c3"/><rect x="811.38" y="463.76" width="38.92" height="30.26" fill="#c3c3c3"/><rect x="199.6" y="493.72" width="32.4" height="30.26" fill="#e6e6e6"/><rect x="232.00" y="493.72" width="38.92" height="30.26" fill="#f5f5f5"/><rect x="270.62" y="493.72" width="38.92" height="30.26" fill="#f5f5f5"/><rect x="309.25" y="493.72" width="38.92" height="30.26" fill="#f5f5f5"/><rect x="347.88" y="493.72" width="38.92" height="30.26" fill="#f5f5f5"/><rect x="386.50" y="493.72" width="38.92" height="30.26" fill="#dcdcdc"/><rect x="425.12" y="493.72" width="38.92" height="30.26" fill="#dcdcdc"/><rect x="463.75" y="493.72" width="38.92" height="30.26" fill="#dcdcdc"/><rect x="502.38" y="493.72" width="38.92" height="30.26" fill="#dcdcdc"/><rect x="541.00" y="493.72" width="38.92" height="30.26" fill="#f5f5f5"/><rect x="579.62" y="493.72" width="38.92" height="30.26" fill="#f5f5f5"/><rect x="618.25" y="493.72" width="38.92" height="30.26" fill="#f5f5f5"/><rect x="656.88" y="493.72" width="38.92" height="30.26" fill="#f5f5f5"/><rect x="695.50" y="493.72" width="38.92" height="30.26" fill="#dcdcdc"/><rect x="734.12" y="493.72" width="38.92" height="30.26" fill="#dcdcdc"/><rect x="772.75" y="493.72" width="38.92" height="30.26" fill="#dcdcdc"/><rect x="811.38" y="493.72" width="38.92" height="30.26" fill="#dcdcdc"/><rect x="199.6" y="523.68" width="32.4" height="30.26" fill="#e6e6e6"/><rect x="232.00" y="523.68" width="38.92" height="30.26" fill="#f5f5f5"/><rect x="270.62" y="523.68" width="38.92" height="30.26" fill="#f5f5f5"/><rect x="309.25" y="523.68" width="38.92" height="30.26" fill="#f5f5f5"/><rect x="347.88" y="523.68" width="38.92" height="30.26" fill="#f5f5f5"/><rect x="386.50" y="523.68" width="38.92" height="30.26" fill="#dcdcdc"/><rect x="425.12" y="523.68" width="38.92" height="30.26" fill="#dcdcdc"/><rect x="463.75" y="523.68" width="38.92" height="30.26" fill="#dcdcdc"/><rect x="502.38" y="523.68" width="38.92" height="30.26" fill="#dcdcdc"/><rect x="541.00" y="523.68" width="38.92" height="30.26" fill="#f5f5f5"/><rect x="579.62" y="523.68" width="38.92" height="30.26" fill="#f5f5f5"/><rect x="618.25" y="523.68" width="38.92" height="30.26" fill="#f5f5f5"/><rect x="656.88" y="523.68" width="38.92" height="30.26" fill="#f5f5f5"/><rect x="695.50" y="523.68" width="38.92" height="30.26" fill="#dcdcdc"/><rect x="734.12" y="523.68" width="38.92" height="30.26" fill="#dcdcdc"/><rect x="772.75" y="523.68" width="38.92" height="30.26" fill="#dcdcdc"/><rect x="811.38" y="523.68" width="38.92" height="30.26" fill="#dcdcdc"/><rect x="199.6" y="553.64" width="32.4" height="30.26" fill="#6b6b6b"/><rect x="232.00" y="553.64" width="38.92" height="30.26" fill="#dadada"/><rect x="270.62" y="553.64" width="38.92" height="30.26" fill="#dadada"/><rect x="309.25" y="553.64" width="38.92" height="30.26" fill="#dadada"/><rect x="347.88" y="553.64" width="38.92" height="30.26" fill="#dadada"/><rect x="386.50" y="553.64" width="38.92" height="30.26" fill="#c3c3c3"/><rect x="425.12" y="553.64" width="38.92" height="30.26" fill="#c3c3c3"/><rect x="463.75" y="553.64" width="38.92" height="30.26" fill="#c3c3c3"/><rect x="502.38" y="553.64" width="38.92" height="30.26" fill="#c3c3c3"/><rect x="541.00" y="553.64" width="38.92" height="30.26" fill="#dadada"/><rect x="579.62" y="553.64" width="38.92" height="30.26" fill="#dadada"/><rect x="618.25" y="553.64" width="38.92" height="30.26" fill="#dadada"/><rect x="656.88" y="553.64" width="38.92" height="30.26" fill="#dadada"/><rect x="695.50" y="553.64" width="38.92" height="30.26" fill="#c3c3c3"/><rect x="734.12" y="553.64" width="38.92" height="30.26" fill="#c3c3c3"/><rect x="772.75" y="553.64" width="38.92" height="30.26" fill="#c3c3c3"/><rect x="811.38" y="553.64" width="38.92" height="30.26" fill="#c3c3c3"/><rect x="199.6" y="583.60" width="32.4" height="30.26" fill="#e6e6e6"/><rect x="232.00" y="583.60" width="38.92" height="30.26" fill="#f5f5f5"/><rect x="270.62" y="583.60" width="38.92" height="30.26" fill="#f5f5f5"/><rect x="309.25" y="583.60" width="38.92" height="30.26" fill="#f5f5f5"/><rect x="347.88" y="583.60" width="38.92" height="30.26" fill="#f5f5f5"/><rect x="386.50" y="583.60" width="38.92" height="30.26" fill="#dcdcdc"/><rect x="425.12" y="583.60" width="38.92" height="30.26" fill="#dcdcdc"/><rect x="463.75" y="583.60" width="38.92" height="30.26" fill="#dcdcdc"/><rect x="502.38" y="583.60" width="38.92" height="30.26" fill="#dcdcdc"/><rect x="541.00" y="583.60" width="38.92" height="30.26" fill="#f5f5f5"/><rect x="579.62" y="583.60" width="38.92" height="30.26" fill="#f5f5f5"/><rect x="618.25" y="583.60" width="38.92" height="30.26" fill="#f5f5f5"/><rect x="656.88" y="583.60" width="38.92" height="30.26" fill="#f5f5f5"/><rect x="695.50" y="583.60" width="38.92" height="30.26" fill="#dcdcdc"/><rect x="734.12" y="583.60" width="38.92" height="30.26" fill="#dcdcdc"/><rect x="772.75" y="583.60" width="38.92" height="30.26" fill="#dcdcdc"/><rect x="811.38" y="583.60" width="38.92" height="30.26" fill="#dcdcdc"/><rect x="199.6" y="613.56" width="32.4" height="30.26" fill="#6b6b6b"/><rect x="232.00" y="613.56" width="38.92" height="30.26" fill="#dadada"/><rect x="270.62" y="613.56" width="38.92" height="30.26" fill="#dadada"/><rect x="309.25" y="613.56" width="38.92" height="30.26" fill="#dadada"/><rect x="347.88" y="613.56" width="38.92" height="30.26" fill="#dadada"/><rect x="386.50" y="613.56" width="38.92" height="30.26" fill="#c3c3c3"/><rect x="425.12" y="613.56" width="38.92" height="30.26" fill="#c3c3c3"/><rect x="463.75" y="613.56" width="38.92" height="30.26" fill="#c3c3c3"/><rect x="502.38" y="613.56" width="38.92" height="30.26" fill="#c3c3c3"/><rect x="541.00" y="613.56" width="38.92" height="30.26" fill="#dadada"/><rect x="579.62" y="613.56" width="38.92" height="30.26" fill="#dadada"/><rect x="618.25" y="613.56" width="38.92" height="30.26" fill="#dadada"/><rect x="656.88" y="613.56" width="38.92" height="30.26" fill="#dadada"/><rect x="695.50" y="613.56" width="38.92" height="30.26" fill="#c3c3c3"/><rect x="734.12" y="613.56" width="38.92" height="30.26" fill="#c3c3c3"/><rect x="772.75" y="613.56" width="38.92" height="30.26" fill="#c3c3c3"/><rect x="811.38" y="613.56" width="38.92" height="30.26" fill="#c3c3c3"/><rect x="199.6" y="643.52" width="32.4" height="30.26" fill="#e6e6e6"/><rect x="232.00" y="643.52" width="38.92" height="30.26" fill="#f5f5f5"/><rect x="270.62" y="643.52" width="38.92" height="30.26" fill="#f5f5f5"/><rect x="309.25" y="643.52" width="38.92" height="30.26" fill="#f5f5f5"/><rect x="347.88" y="643.52" width="38.92" height="30.26" fill="#f5f5f5"/><rect x="386.50" y="643.52" width="38.92" height="30.26" fill="#dcdcdc"/><rect x="425.12" y="643.52" width="38.92" height="30.26" fill="#dcdcdc"/><rect x="463.75" y="643.52" width="38.92" height="30.26" fill="#dcdcdc"/><rect x="502.38" y="643.52" width="38.92" height="30.26" fill="#dcdcdc"/><rect x="541.00" y="643.52" width="38.92" height="30.26" fill="#f5f5f5"/><rect x="579.62" y="643.52" width="38.92" height="30.26" fill="#f5f5f5"/><rect x="618.25" y="643.52" width="38.92" height="30.26" fill="#f5f5f5"/><rect x="656.88" y="643.52" width="38.92" height="30.26" fill="#f5f5f5"/><rect x="695.50" y="643.52" width="38.92" height="30.26" fill="#dcdcdc"/><rect x="734.12" y="643.52" width="38.92" height="30.26" fill="#dcdcdc"/><rect x="772.75" y="643.52" width="38.92" height="30.26" fill="#dcdcdc"/><rect x="811.38" y="643.52" width="38.92" height="30.26" fill="#dcdcdc"/><rect x="232" y="313.36" width="618" height="1.2" fill="#c4c4c4"/><rect x="232" y="343.32" width="618" height="1.2" fill="#c4c4c4"/><rect x="232" y="373.28" width="618" height="1.2" fill="#c4c4c4"/><rect x="232" y="403.24" width="618" height="1.2" fill="#c4c4c4"/><rect x="232" y="433.20" width="618" height="1.2" fill="#c4c4c4"/><rect x="232" y="463.16" width="618" height="1.2" fill="#c4c4c4"/><rect x="232" y="493.12" width="618" height="1.2" fill="#c4c4c4"/><rect x="232" y="523.08" width="618" height="1.2" fill="#c4c4c4"/><rect x="232" y="553.04" width="618" height="1.2" fill="#c4c4c4"/><rect x="232" y="583.00" width="618" height="1.2" fill="#c4c4c4"/><rect x="232" y="612.96" width="618" height="1.2" fill="#c4c4c4"/><rect x="232" y="642.92" width="618" height="1.2" fill="#c4c4c4"/><rect x="772.75" y="343.92" width="38.92" height="29.96" fill="#1e2228"/><rect x="425.12" y="433.80" width="38.92" height="29.96" fill="#1e2228"/><rect x="656.88" y="583.60" width="38.92" height="29.96" fill="#1e2228"/><rect x="734.12" y="403.84" width="38.92" height="29.96" fill="#1e2228"/><rect x="579.62" y="553.64" width="38.92" height="29.96" fill="#1e2228"/><rect x="386.50" y="583.60" width="38.92" height="29.96" fill="#1e2228"/><rect x="232.00" y="643.52" width="38.92" height="29.96" fill="#1e2228"/><rect x="695.50" y="553.64" width="38.92" height="29.96" fill="#1e2228"/><rect x="309.25" y="403.84" width="38.92" height="29.96" fill="#1e2228"/><rect x="347.88" y="643.52" width="38.92" height="29.96" fill="#1e2228"/><rect x="618.25" y="583.60" width="38.92" height="29.96" fill="#1e2228"/><rect x="463.75" y="433.80" width="38.92" height="29.96" fill="#1e2228"/><rect x="811.38" y="343.92" width="38.92" height="29.96" fill="#1e2228"/><rect x="270.62" y="553.64" width="38.92" height="29.96" fill="#1e2228"/><rect x="541.00" y="643.52" width="38.92" height="29.96" fill="#7b7f85"/><rect x="502.38" y="403.84" width="38.92" height="29.96" fill="#7b7f85"/><rect x="270.07" y="284" width="1.1" height="389.5" fill="#bcbcbc"/><rect x="308.70" y="284" width="1.1" height="389.5" fill="#bcbcbc"/><rect x="347.32" y="284" width="1.1" height="389.5" fill="#bcbcbc"/><rect x="385.95" y="284" width="1.1" height="389.5" fill="#a4a4a4"/><rect x="424.57" y="284" width="1.1" height="389.5" fill="#bcbcbc"/><rect x="463.20" y="284" width="1.1" height="389.5" fill="#bcbcbc"/><rect x="501.82" y="284" width="1.1" height="389.5" fill="#bcbcbc"/><rect x="540.45" y="284" width="1.1" height="389.5" fill="#a4a4a4"/><rect x="579.08" y="284" width="1.1" height="389.5" fill="#bcbcbc"/><rect x="617.70" y="284" width="1.1" height="389.5" fill="#bcbcbc"/><rect x="656.33" y="284" width="1.1" height="389.5" fill="#bcbcbc"/><rect x="694.95" y="284" width="1.1" height="389.5" fill="#a4a4a4"/><rect x="733.58" y="284" width="1.1" height="389.5" fill="#bcbcbc"/><rect x="772.20" y="284" width="1.1" height="389.5" fill="#bcbcbc"/><rect x="810.83" y="284" width="1.1" height="389.5" fill="#bcbcbc"/><rect x="801.58" y="356.00" width="19.6" height="5.8" fill="#1466f5"/><rect x="453.95" y="445.88" width="19.6" height="5.8" fill="#1466f5"/><rect x="492.57" y="445.88" width="19.6" height="5.8" fill="#1466f5"/><rect x="647.08" y="595.68" width="19.6" height="5.8" fill="#1466f5"/></g></svg>
<div class="t" style="left:207.00px;top:294.29px;font-size:11.02px;line-height:11.02px;letter-spacing:2.32px;font-weight:700;color:#1c1c1c;">C4</div>
<div class="t" style="left:209.05px;top:323.73px;font-size:9.60px;line-height:9.60px;letter-spacing:0.40px;font-weight:700;transform:scaleX(0.971);transform-origin:0 0;color:#1c1c1c;">B3</div>
<div class="t" style="left:205.15px;top:354.67px;font-size:9.16px;line-height:9.16px;letter-spacing:2.14px;font-weight:700;color:#efefef;">A#3</div>
<div class="t" style="left:210.05px;top:384.17px;font-size:9.60px;line-height:9.60px;letter-spacing:0.40px;font-weight:700;transform:scaleX(0.971);transform-origin:0 0;color:#1c1c1c;">A3</div>
<div class="t" style="left:205.15px;top:415.24px;font-size:8.90px;line-height:8.90px;letter-spacing:2.14px;font-weight:700;color:#efefef;">G#3</div>
<div class="t" style="left:210.05px;top:444.75px;font-size:9.33px;line-height:9.33px;letter-spacing:0.40px;font-weight:700;transform:scaleX(0.957);transform-origin:0 0;color:#1c1c1c;">G3</div>
<div class="t" style="left:205.15px;top:474.55px;font-size:9.16px;line-height:9.16px;letter-spacing:2.66px;font-weight:700;color:#efefef;">F#3</div>
<div class="t" style="left:209.55px;top:504.05px;font-size:9.60px;line-height:9.60px;letter-spacing:1.09px;font-weight:700;color:#1c1c1c;">F3</div>
<div class="t" style="left:209.55px;top:533.77px;font-size:9.60px;line-height:9.60px;letter-spacing:0.56px;font-weight:700;color:#1c1c1c;">E3</div>
<div class="t" style="left:205.15px;top:564.71px;font-size:9.16px;line-height:9.16px;letter-spacing:2.14px;font-weight:700;color:#efefef;">D#3</div>
<div class="t" style="left:209.05px;top:593.21px;font-size:9.60px;line-height:9.60px;letter-spacing:0.40px;font-weight:700;transform:scaleX(0.971);transform-origin:0 0;color:#1c1c1c;">D3</div>
<div class="t" style="left:205.15px;top:624.28px;font-size:8.90px;line-height:8.90px;letter-spacing:2.38px;font-weight:700;color:#efefef;">C#3</div>
<div class="t" style="left:207.00px;top:653.93px;font-size:11.02px;line-height:11.02px;letter-spacing:2.32px;font-weight:700;color:#1c1c1c;">C3</div>
<div class="b" style="left:877px;top:283px;width:10px;height:390px;background:#2a2f38;border-radius:5px;"></div>
<div class="b" style="left:877px;top:450.6px;width:10px;height:39.39999999999998px;background:#eaeaea;border-radius:5px;"></div>
<div class="b" style="left:988px;top:198px;width:50px;height:51px;background:radial-gradient(circle at 50% 50%, #2a66f4 0%, #1452f6 45%, #0b48f5 100%);border-radius:9px;"></div>
<svg class="b" style="left:1000px;top:210px;" width="28" height="26" viewBox="1000 210 28 26"><g fill="none" stroke="#e6eeff" stroke-width="1.6" stroke-linecap="round" stroke-linejoin="round"><path d="M1005,230.5 L1011,225.3"/><path d="M1017,215 L1011.3,221.8 Q1010.2,224.6 1012.4,225.4 Q1013.9,225.9 1015,224.7 L1021.2,219"/></g></svg>
<div class="t" style="left:923.60px;top:218.33px;font-size:12.80px;line-height:12.80px;letter-spacing:1.10px;font-weight:700;color:#eeeeee;">Pitch</div>
<div class="b" style="left:934px;top:277px;width:80px;height:27px;background:#262a32;border-radius:3px;filter:blur(2.5px)"></div>
<svg class="b" style="left:924px;top:282px;" width="16" height="18" viewBox="924 282 16 18"><path d="M937.3,284.4 L927.4,290.5 L937.3,296.6 Z" fill="#4f545d"/></svg>
<svg class="b" style="left:1003px;top:282px;" width="16" height="18" viewBox="1003 282 16 18"><path d="M1005.8,284.4 L1015.7,290.5 L1005.8,296.6 Z" fill="#4f545d"/></svg>
<div class="t" style="left:961.10px;top:285.30px;font-size:13.85px;line-height:13.85px;letter-spacing:1.50px;font-weight:700;color:#eeeeee;">C3</div>
<div class="b" style="left:988px;top:332px;width:50px;height:50px;background:#2a2f38;border-radius:9px;box-shadow:0 2px 3px rgba(0,0,0,0.25)"></div>
<div class="b" style="left:988px;top:446px;width:50px;height:50px;background:#2a2f38;border-radius:9px;box-shadow:0 2px 3px rgba(0,0,0,0.25)"></div>
<div class="b" style="left:988px;top:560px;width:50px;height:50px;background:#2a2f38;border-radius:9px;box-shadow:0 2px 3px rgba(0,0,0,0.25)"></div>
<div class="t" style="left:913.90px;top:351.73px;font-size:12.22px;line-height:12.22px;letter-spacing:1.44px;font-weight:700;color:#393e47;">Duration</div>
<div class="t" style="left:913.90px;top:465.44px;font-size:13.38px;line-height:13.38px;letter-spacing:1.17px;font-weight:700;color:#393e47;">Velocity</div>
<div class="t" style="left:913.40px;top:578.89px;font-size:13.09px;line-height:13.09px;letter-spacing:0.90px;font-weight:700;color:#393e47;">Density</div>
<svg class="b" style="left:1000px;top:344px;" width="28" height="28" viewBox="1000 344 28 28"><g fill="#50555e"><circle cx="1013" cy="358.5" r="7.6"/><rect x="1011.3" y="348.3" width="3.4" height="2.6"/><rect x="1010" y="347.3" width="6" height="1.6"/></g><path d="M1013,358.5 L1016,354.5" stroke="#2a2f38" stroke-width="1.3"/></svg>
<svg class="b" style="left:1000px;top:455px;" width="28" height="32" viewBox="1000 455 28 32"><g fill="none" stroke="#5f646d" stroke-linecap="round"><path d="M1007,478.2 C1009.5,479 1011,476.5 1012.3,472.5 L1014.3,466 C1015.3,463 1017,461.8 1019.3,463.6" stroke-width="1.9"/><path d="M1010.6,467.8 H1017.3" stroke-width="1"/></g><circle cx="1007" cy="477.6" r="1.5" fill="#5f646d"/><circle cx="1019.2" cy="464" r="1.5" fill="#5f646d"/></svg>
<svg class="b" style="left:1000px;top:570px;" width="28" height="28" viewBox="1000 570 28 28"><circle cx="1006.5" cy="577.5" r="2.2" fill="#5a5f68"/><circle cx="1011.5" cy="577" r="1.6" fill="#5a5f68"/><circle cx="1016" cy="578" r="2" fill="#5a5f68"/><circle cx="1020.5" cy="577.5" r="1.6" fill="#5a5f68"/><circle cx="1005" cy="582" r="1.5" fill="#5a5f68"/><circle cx="1009.5" cy="582.5" r="2.2" fill="#5a5f68"/><circle cx="1014.5" cy="582" r="1.7" fill="#5a5f68"/><circle cx="1019.5" cy="582.5" r="2.2" fill="#5a5f68"/><circle cx="1006.5" cy="587" r="2" fill="#5a5f68"/><circle cx="1011.5" cy="587.5" r="1.6" fill="#5a5f68"/><circle cx="1016" cy="587" r="2.2" fill="#5a5f68"/><circle cx="1021" cy="587" r="1.6" fill="#5a5f68"/><circle cx="1005.5" cy="591.5" r="1.5" fill="#5a5f68"/><circle cx="1010" cy="592" r="1.8" fill="#5a5f68"/><circle cx="1015" cy="591.5" r="1.4" fill="#5a5f68"/><circle cx="1019.5" cy="592" r="2.1" fill="#5a5f68"/></svg>
<div class="t" style="left:1001.80px;top:390.65px;font-size:14.55px;line-height:14.55px;letter-spacing:0.67px;font-weight:400;color:#f0f0f0;">100</div>
<div class="t" style="left:1004.00px;top:504.58px;font-size:13.99px;line-height:13.99px;letter-spacing:3.43px;font-weight:400;color:#f0f0f0;">80</div>
<div class="b" style="left:914.5px;top:412px;width:113.5px;height:9.199999999999989px;background:#0a4bff;border-radius:4.6px;"></div>
<div class="b" style="left:914.5px;top:526px;width:113.5px;height:9.100000000000023px;background:#2a2f38;border-radius:4.6px;"></div>
<div class="b" style="left:914.5px;top:526px;width:91.29999999999995px;height:9.100000000000023px;background:#0a4bff;border-radius:4.6px;border-radius:4.6px 0 0 4.6px"></div>
<div class="b" style="left:915px;top:638px;width:81px;height:27.5px;background:#272b34;border-radius:4px;"></div>
<div class="b" style="left:997.3px;top:638px;width:30.700000000000045px;height:27.5px;background:#272b34;border-radius:4px;"></div>
<svg class="b" style="left:918px;top:642px;" width="18" height="20" viewBox="918 642 18 20"><g fill="#5a5f68"><ellipse cx="923.5" cy="651.5" rx="2.6" ry="4.3"/><ellipse cx="929.8" cy="648.5" rx="2.6" ry="4.3"/><rect x="922" y="656.5" width="3" height="2.5" rx="1"/><rect x="928.3" y="653.5" width="3" height="2.5" rx="1"/></g></svg>
<div class="t" style="left:953.50px;top:647.96px;font-size:10.18px;line-height:10.18px;letter-spacing:0.00px;font-weight:700;color:#f6f6f6;">2</div>
<svg class="b" style="left:978px;top:644px;" width="14" height="16" viewBox="978 644 14 16"><g fill="#5a5f68"><path d="M981,650.8 L984.4,646.8 L987.8,650.8 Z"/><path d="M981,652.8 L984.4,656.8 L987.8,652.8 Z"/></g></svg>
<svg class="b" style="left:1002px;top:644px;" width="24" height="16" viewBox="1002 644 24 16"><path d="M1004,651.2 L1010,647 L1010,649.8 C1014,649.6 1017.5,650.5 1020.8,653.2 C1017.5,652.5 1014,652.2 1010,652.6 L1010,655.4 Z" fill="#5a5f68"/></svg>
<div class="t" style="left:30.70px;top:743.73px;font-size:10.33px;line-height:10.33px;letter-spacing:1.24px;font-weight:700;color:#eeeeee;">Presets</div>
<svg class="b" style="left:80px;top:735px;" width="26" height="26" viewBox="80 735 26 26"><g fill="#e8e8e8"><rect x="83.7" y="738" width="9" height="9"/><rect x="94.4" y="738" width="9" height="9"/><rect x="83.7" y="748" width="9" height="9"/><rect x="94.4" y="748" width="9" height="9"/></g></svg>
<div class="b" style="left:177px;top:735px;width:27.30000000000001px;height:25px;background:#1f232b;border-radius:6px;"></div>
<div class="b" style="left:218.6px;top:735px;width:27.099999999999994px;height:25px;background:#1f232b;border-radius:6px;"></div>
<svg class="b" style="left:180px;top:737px;" width="60" height="22" viewBox="180 737 60 22"><g fill="none" stroke="#f0f0f0" stroke-width="1.8"><path d="M193,742.5 L188.2,747.5 L193,752.5"/><path d="M230,742.5 L234.8,747.5 L230,752.5"/></g></svg>
<div class="b" style="left:293.3px;top:728.3px;width:482.40000000000003px;height:37.90000000000009px;background:#1f232b;border-radius:19px;"></div>
<div class="b" style="left:495.6px;top:731.6px;width:77.79999999999995px;height:31.399999999999977px;background:#0a4bff;border-radius:15.7px;box-shadow:0 2px 3px rgba(0,0,0,0.3)"></div>
<div class="t" style="left:325.60px;top:743.36px;font-size:11.47px;line-height:11.47px;letter-spacing:2.76px;font-weight:700;color:#50555e;">-24</div>
<div class="t" style="left:426.40px;top:742.22px;font-size:11.64px;line-height:11.64px;letter-spacing:0.99px;font-weight:700;color:#50555e;">-12</div>
<div class="t" style="left:530.40px;top:743.39px;font-size:11.31px;line-height:11.31px;letter-spacing:0.00px;font-weight:700;color:#f6f6f6;">0</div>
<div class="t" style="left:621.30px;top:742.22px;font-size:11.64px;line-height:11.64px;letter-spacing:0.87px;font-weight:700;color:#50555e;">+12</div>
<div class="t" style="left:718.10px;top:743.36px;font-size:11.47px;line-height:11.47px;letter-spacing:2.42px;font-weight:700;color:#50555e;">+24</div>
<div class="b" style="left:822.6px;top:734.6px;width:27.399999999999977px;height:25.100000000000023px;background:#1f232b;border-radius:6px;"></div>
<div class="b" style="left:864.4px;top:734.6px;width:27.899999999999977px;height:25.100000000000023px;background:#1f232b;border-radius:6px;"></div>
<svg class="b" style="left:825px;top:738px;" width="64" height="20" viewBox="825 738 64 20"><g fill="none" stroke="#f0f0f0" stroke-width="2"><path d="M831.5,745 L836.3,749.6 L841.1,745"/><path d="M873.5,750 L878.3,745.4 L883.1,750"/></g></svg>
<svg class="b" style="left:948px;top:714px;" width="36" height="36" viewBox="948 714 36 36"><circle cx="965.6" cy="730.5" r="12.4" fill="#ececec"/>
<g fill="#1f232b"><circle cx="958.9" cy="730" r="1.15"/><circle cx="960.6" cy="725.5" r="1.15"/><circle cx="965.4" cy="723.5" r="1.15"/><circle cx="970.3" cy="725.5" r="1.15"/><circle cx="972.3" cy="730" r="1.15"/><path d="M963.2,743.2 Q965.6,739.8 968,743.2 Z" fill="#2a2f38"/></g></svg>
<svg class="b" style="left:1036px;top:774px;" width="14" height="14" viewBox="1036 774 14 14"><g stroke="#8a8f98" stroke-width="0.9"><path d="M1040,788 L1050,778 M1044,788 L1050,782 M1047.5,788 L1050,785.5"/></g></svg>
</body></html>
